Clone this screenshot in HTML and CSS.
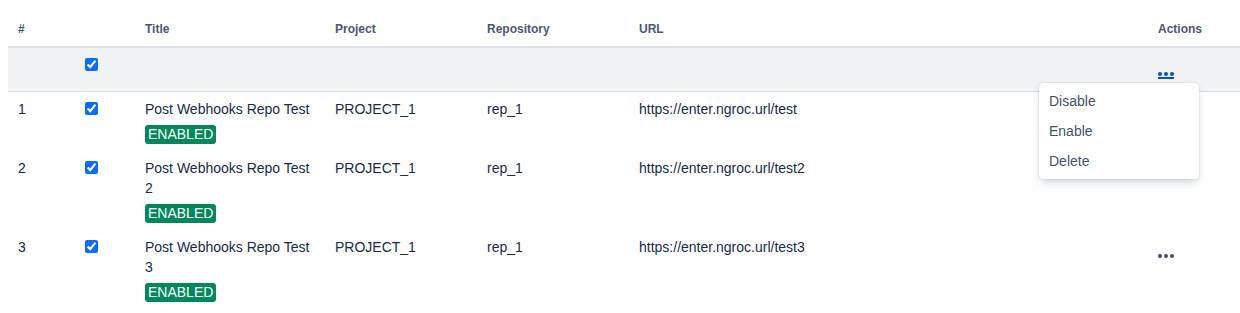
FILE: index.html
```html
<!DOCTYPE html>
<html lang="en">
<head>
  <meta charset="UTF-8">
  <title>Webhooks</title>
  <link rel="stylesheet" href="styles.css">
</head>
<body>
  <table class="hooks">
    <colgroup>
      <col class="c-num"><col class="c-check"><col class="c-title"><col class="c-project">
      <col class="c-repo"><col class="c-url"><col class="c-actions">
    </colgroup>
    <thead>
      <tr>
        <th>#</th>
        <th></th>
        <th>Title</th>
        <th>Project</th>
        <th>Repository</th>
        <th>URL</th>
        <th>Actions</th>
      </tr>
    </thead>
    <tbody>
      <tr class="bulk">
        <td></td>
        <td><input type="checkbox" class="check" checked></td>
        <td></td>
        <td></td>
        <td></td>
        <td></td>
        <td>
          <div class="action-wrap">
            <span class="more active">
              <svg width="16" height="4" viewBox="0 0 16 4"><circle cx="2" cy="2" r="2"/><circle cx="8" cy="2" r="2"/><circle cx="14" cy="2" r="2"/></svg>
            </span>
            <div class="menu">
              <div class="menu-item">Disable</div>
              <div class="menu-item">Enable</div>
              <div class="menu-item">Delete</div>
            </div>
          </div>
        </td>
      </tr>
      <tr>
        <td>1</td>
        <td><input type="checkbox" class="check" checked></td>
        <td>Post Webhooks Repo Test<span class="badge">ENABLED</span></td>
        <td>PROJECT_1</td>
        <td>rep_1</td>
        <td>https://enter.ngroc.url/test</td>
        <td><span class="more"><svg width="16" height="4" viewBox="0 0 16 4"><circle cx="2" cy="2" r="2"/><circle cx="8" cy="2" r="2"/><circle cx="14" cy="2" r="2"/></svg></span></td>
      </tr>
      <tr>
        <td>2</td>
        <td><input type="checkbox" class="check" checked></td>
        <td>Post Webhooks Repo Test 2<span class="badge">ENABLED</span></td>
        <td>PROJECT_1</td>
        <td>rep_1</td>
        <td>https://enter.ngroc.url/test2</td>
        <td><span class="more"><svg width="16" height="4" viewBox="0 0 16 4"><circle cx="2" cy="2" r="2"/><circle cx="8" cy="2" r="2"/><circle cx="14" cy="2" r="2"/></svg></span></td>
      </tr>
      <tr>
        <td>3</td>
        <td><input type="checkbox" class="check" checked></td>
        <td>Post Webhooks Repo Test 3<span class="badge">ENABLED</span></td>
        <td>PROJECT_1</td>
        <td>rep_1</td>
        <td>https://enter.ngroc.url/test3</td>
        <td><span class="more"><svg width="16" height="4" viewBox="0 0 16 4"><circle cx="2" cy="2" r="2"/><circle cx="8" cy="2" r="2"/><circle cx="14" cy="2" r="2"/></svg></span></td>
      </tr>
    </tbody>
  </table>
</body>
</html>
```

FILE: styles.css
```css
body {
  margin: 8px 0 0 8px;
  font-family: 'Liberation Sans', Arial, sans-serif;
  font-size: 14px;
  color: #172b4d;
  background: #fff;
}

.hooks {
  width: 100%;
  table-layout: fixed;
  border-collapse: collapse;
}

.c-num { width: 67px; }
.c-check { width: 60px; }
.c-title { width: 190px; }
.c-project { width: 152px; }
.c-repo { width: 152px; }
.c-url { width: 519px; }

th {
  padding: 13px 10px 9px;
  font-size: 12px;
  line-height: 16px;
  font-weight: bold;
  color: #4a5874;
  text-align: left;
  border-bottom: 2px solid #dfe1e6;
}

td {
  padding: 7px 10px 7px;
  line-height: 20px;
  vertical-align: top;
}

.bulk td {
  height: 42px;
  box-sizing: border-box;
  background: #f1f2f4;
  border-bottom: 1px solid #dfe1e6;
}

.check {
  display: block;
  width: 13px;
  height: 13px;
  margin: 3px 0 0;
  accent-color: #0b6cf5;
}

.badge {
  display: block;
  width: fit-content;
  margin-top: 6px;
  padding: 0 3px;
  height: 19px;
  line-height: 19px;
  border-radius: 3px;
  background: #00875a;
  color: #fff;
  font-size: 14px;
}

.more {
  display: inline-block;
  margin-top: 17px;
  fill: #42526e;
  line-height: 0;
}

.more svg {
  display: block;
}

.more.active {
  fill: #0052cc;
  padding-bottom: 1px;
  border-bottom: 2px solid #0052cc;
}

.action-wrap {
  position: relative;
}

.menu {
  position: absolute;
  top: 28px;
  left: -119px;
  width: 160px;
  padding: 3px 0;
  background: #fff;
  border-radius: 4px;
  box-shadow: 0 4px 8px -2px rgba(9, 30, 66, 0.25), 0 0 1px rgba(9, 30, 66, 0.31);
  z-index: 10;
}

.menu-item {
  padding: 0 10px;
  line-height: 30px;
  color: #42526e;
}
```
